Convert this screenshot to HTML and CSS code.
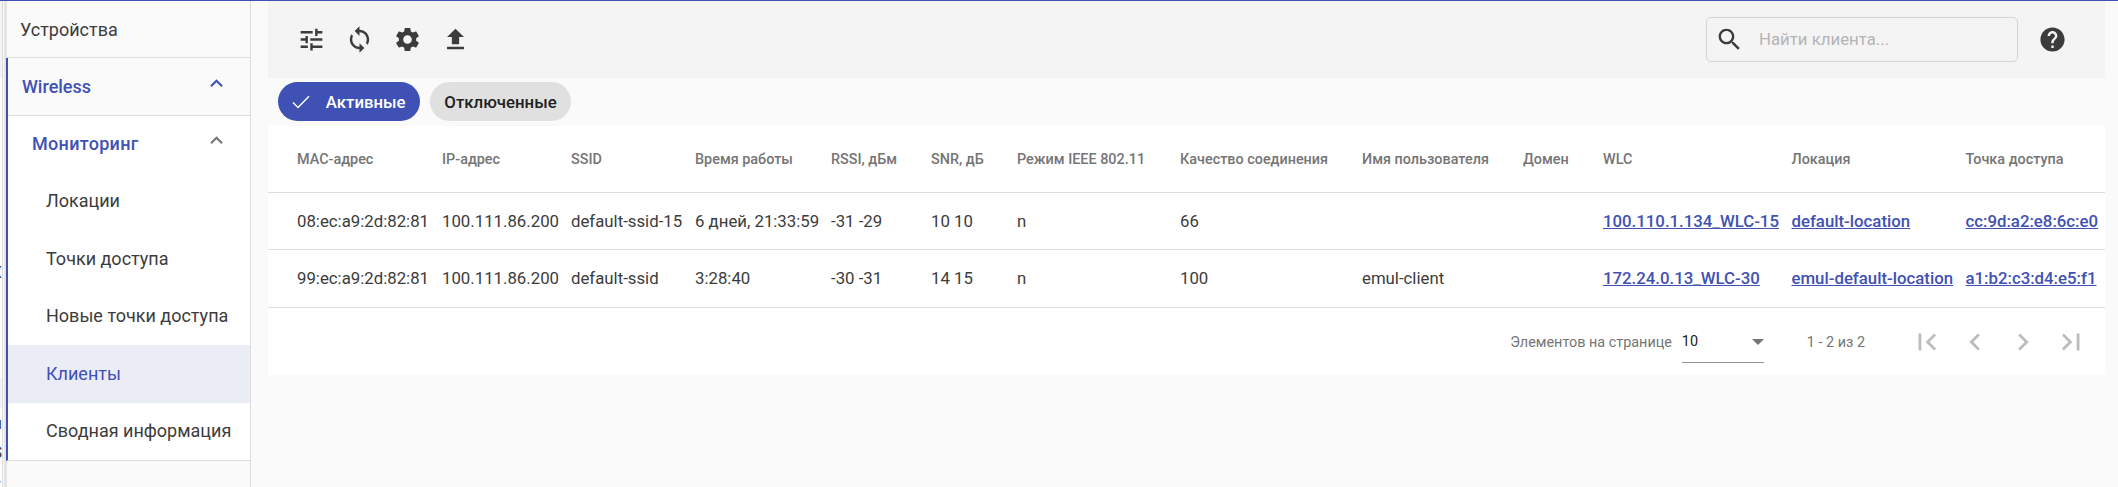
FILE: index.html
```html
<!DOCTYPE html>
<html lang="ru">
<head>
<meta charset="utf-8">
<title>Клиенты</title>
<link rel="stylesheet" href="styles.css">
</head>
<body>
<div class="app">
  <div class="rail">
    <div class="rail-head"></div>
    <div class="rail-body"><span class="frag f1">X</span></div>
    <div class="rail-band"></div>
    <div class="rail-foot"><span class="frag f2">и</span><span class="frag f3">S</span><span class="frag f4">–</span></div>
  </div>
  <div class="gutter"></div>
  <nav class="sidebar">
    <a class="nav-top">Устройства</a>
    <div class="nav-group">
      <a class="nav-title">Wireless<svg class="chev" viewBox="0 0 24 24"><path d="M12 8l-6 6 1.41 1.41L12 10.83l4.59 4.58L18 14z"/></svg></a>
      <div class="nav-list">
        <a class="nav-sub">Мониторинг<svg class="chev grey" viewBox="0 0 24 24"><path d="M12 8l-6 6 1.41 1.41L12 10.83l4.59 4.58L18 14z"/></svg></a>
        <a class="nav-item">Локации</a>
        <a class="nav-item">Точки доступа</a>
        <a class="nav-item">Новые точки доступа</a>
        <a class="nav-item active">Клиенты</a>
        <a class="nav-item">Сводная информация</a>
      </div>
    </div>
  </nav>
  <main class="main">
    <header class="toolbar">
      <div class="tools">
        <svg class="icon" viewBox="0 0 24 24"><path d="M3 17v2h6v-2H3zM3 5v2h10V5H3zm10 16v-2h8v-2h-8v-2h-2v6h2zM7 9v2H3v2h4v2h2V9H7zm14 4v-2H11v2h10zm-6-4h2V7h4V5h-4V3h-2v6z"/></svg>
        <svg class="icon" viewBox="0 0 24 24"><path d="M12 4V1L8 5l4 4V6c3.31 0 6 2.69 6 6 0 1.01-.25 1.97-.7 2.8l1.46 1.46C19.54 15.03 20 13.57 20 12c0-4.42-3.58-8-8-8zm0 14c-3.31 0-6-2.69-6-6 0-1.01.25-1.97.7-2.8L5.24 7.74C4.46 8.97 4 10.43 4 12c0 4.42 3.58 8 8 8v3l4-4-4-4v3z"/></svg>
        <svg class="icon" viewBox="0 0 24 24"><path d="M19.14 12.94c.04-.3.06-.61.06-.94 0-.32-.02-.64-.07-.94l2.03-1.58c.18-.14.23-.41.12-.61l-1.92-3.32c-.12-.22-.37-.29-.59-.22l-2.39.96c-.5-.38-1.03-.7-1.62-.94l-.36-2.54c-.04-.24-.24-.41-.48-.41h-3.84c-.24 0-.43.17-.47.41l-.36 2.54c-.59.24-1.13.57-1.62.94l-2.39-.96c-.22-.08-.47 0-.59.22L2.74 8.87c-.12.21-.08.47.12.61l2.03 1.58c-.05.3-.09.63-.09.94s.02.64.07.94l-2.03 1.58c-.18.14-.23.41-.12.61l1.92 3.32c.12.22.37.29.59.22l2.39-.96c.5.38 1.03.7 1.62.94l.36 2.54c.05.24.24.41.48.41h3.84c.24 0 .44-.17.47-.41l.36-2.54c.59-.24 1.13-.56 1.62-.94l2.39.96c.22.08.47 0 .59-.22l1.92-3.32c.12-.22.07-.47-.12-.61l-2.01-1.58zM12 15.6c-1.98 0-3.6-1.62-3.6-3.6s1.62-3.6 3.6-3.6 3.6 1.62 3.6 3.6-1.62 3.6-3.6 3.6z"/></svg>
        <svg class="icon" viewBox="0 0 24 24"><path d="M5 20h14v-2H5v2zM5 10h4v6h6v-6h4l-7-7-7 7z"/></svg>
      </div>
      <div class="search">
        <svg class="icon" viewBox="0 0 24 24"><path d="M15.5 14h-.79l-.28-.27C15.41 12.59 16 11.11 16 9.5 16 5.91 13.09 3 9.5 3S3 5.91 3 9.5 5.91 16 9.5 16c1.61 0 3.09-.59 4.23-1.57l.27.28v.79l5 4.99L20.49 19l-4.99-5zm-6 0C7.01 14 5 11.99 5 9.5S7.01 5 9.5 5 14 7.01 14 9.5 11.99 14 9.5 14z"/></svg>
        <span class="placeholder">Найти клиента...</span>
      </div>
      <svg class="icon help" viewBox="0 0 24 24"><path d="M12 2C6.48 2 2 6.48 2 12s4.48 10 10 10 10-4.48 10-10S17.52 2 12 2zm1 17h-2v-2h2v2zm2.07-7.75l-.9.92C13.45 12.9 13 13.5 13 15h-2v-.5c0-1.1.45-2.1 1.17-2.83l1.24-1.26c.37-.36.59-.86.59-1.41 0-1.1-.9-2-2-2s-2 .9-2 2H8c0-2.21 1.79-4 4-4s4 1.79 4 4c0 .88-.36 1.68-.93 2.25z"/></svg>
    </header>
    <div class="chips">
      <button class="chip on"><svg class="tick" viewBox="0 0 18 14"><path d="M1 7.5L6 12.5 17 1.2"/></svg>Активные</button>
      <button class="chip">Отключенные</button>
    </div>
    <section class="card">
      <table class="grid">
        <colgroup><col class="c1"><col class="c2"><col class="c3"><col class="c4"><col class="c5"><col class="c6"><col class="c7"><col class="c8"><col class="c9"><col class="c10"><col class="c11"><col class="c12"><col class="c13"></colgroup>
        <thead><tr><th>MAC-адрес</th><th>IP-адрес</th><th>SSID</th><th>Время работы</th><th>RSSI, дБм</th><th>SNR, дБ</th><th>Режим IEEE 802.11</th><th>Качество соединения</th><th>Имя пользователя</th><th>Домен</th><th>WLC</th><th>Локация</th><th>Точка доступа</th></tr></thead>
        <tbody>
          <tr><td>08:ec:a9:2d:82:81</td><td>100.111.86.200</td><td>default-ssid-15</td><td>6 дней, 21:33:59</td><td>-31 -29</td><td>10 10</td><td>n</td><td>66</td><td></td><td></td><td><a class="link">100.110.1.134_WLC-15</a></td><td><a class="link">default-location</a></td><td><a class="link">cc:9d:a2:e8:6c:e0</a></td></tr>
          <tr class="last"><td>99:ec:a9:2d:82:81</td><td>100.111.86.200</td><td>default-ssid</td><td>3:28:40</td><td>-30 -31</td><td>14 15</td><td>n</td><td>100</td><td>emul-client</td><td></td><td><a class="link">172.24.0.13_WLC-30</a></td><td><a class="link">emul-default-location</a></td><td><a class="link">a1:b2:c3:d4:e5:f1</a></td></tr>
        </tbody>
      </table>
      <footer class="pager">
        <span class="pager-label">Элементов на странице</span>
        <span class="select">10<i class="caret"></i></span>
        <span class="range">1 - 2 из 2</span>
        <span class="pages">
          <svg viewBox="0 0 24 24"><path d="M18.41 16.59L13.82 12l4.59-4.59L17 6l-6 6 6 6zM6 6h2v12H6z"/></svg>
          <svg viewBox="0 0 24 24"><path d="M15.41 7.41L14 6l-6 6 6 6 1.41-1.41L10.83 12z"/></svg>
          <svg viewBox="0 0 24 24"><path d="M10 6L8.59 7.41 13.17 12l-4.58 4.59L10 18l6-6z"/></svg>
          <svg viewBox="0 0 24 24"><path d="M5.59 7.41L10.18 12l-4.59 4.59L7 18l6-6-6-6zM16 6h2v12h-2z"/></svg>
        </span>
      </footer>
    </section>
  </main>
</div>
</body>
</html>
```
FILE: styles.css
```css
* { box-sizing: border-box; }
body { margin: 0; background: #fafafa; color: #3c3c3c; font-family: Roboto, "Noto Sans", sans-serif; }
.app { display: flex; height: 487px; overflow: hidden; border-top: 1px solid #3f51b5; }

.rail { flex: none; display: flex; flex-direction: column; width: 3px; border-right: 1px solid #dcdcdc; overflow: hidden; background: #fff; }
.rail-head { height: 77px; background: #f4f4f4; }
.rail-body { position: relative; height: 300px; }
.rail-band { height: 30px; background: #f4f4f4; }
.rail-foot { position: relative; flex: 1; background: #fff; }
.frag { position: absolute; right: 0; font-size: 17px; line-height: 20px; }
.f1 { top: 184px; }
.f2 { top: 5px; }
.f3 { top: 34px; }
.f4 { top: 64px; }
.gutter { flex: none; width: 3px; margin-left: 1px; background: #e4e4e4; }

.sidebar { flex: none; width: 245px; border-right: 1px solid #dcdcdc; margin-left: -1px; font-size: 18px; }
.sidebar a { display: flex; align-items: center; }
.nav-top { height: 57px; padding-left: 14px; border-bottom: 1px solid #dcdcdc; }
.nav-group { border-left: 2px solid #3f51b5; border-bottom: 1px solid #dcdcdc; }
.nav-title { height: 58px; padding-left: 14px; color: #3f51b5; font-weight: 500; border-bottom: 1px solid #dcdcdc; }
.nav-list { background: #fff; }
.nav-sub { height: 57px; padding: 0 0 2px 24px; color: #3f51b5; font-weight: 500; letter-spacing: .3px; }
.nav-item { height: 57.4px; padding: 0 0 2px 38px; }
.nav-item.active { padding-bottom: 0; background: #eaecf6; color: #3f51b5; }
.chev { width: 25px; height: 25px; margin: -7px 21px 0 auto; fill: #3f51b5; }
.chev.grey { margin-top: -6px; fill: #757575; }

.main { flex: none; width: 1837px; margin-left: 17px; }
.toolbar { display: flex; align-items: center; height: 77px; padding: 0 38.5px 0 29px; background: #f4f4f4; }
.icon { width: 29px; height: 29px; fill: #3c3c3c; display: block; flex: none; }
.tools { display: flex; gap: 19px; flex: 1; }
.search { display: flex; align-items: center; width: 312px; height: 45px; border: 1px solid #d4d4d4; border-radius: 5px; padding-left: 8px; }
.placeholder { margin-left: 15px; padding-bottom: 1px; font-size: 16.8px; color: #b4b4b4; }
.help { margin-left: 19.5px; }
.chips { display: flex; gap: 10px; padding: 4px 10px; height: 48px; }
.chip { display: flex; align-items: center; height: 39px; border: 0; border-radius: 20px; padding: 0 14.4px; font: 500 16.8px Roboto, sans-serif; background: #e0e0e0; color: #212121; }
.chip.on { background: #3f51b5; color: #fff; }
.tick { width: 18px; height: 14px; margin-right: 15.4px; fill: none; stroke: #fff; stroke-width: 1.5; }

.card { background: #fff; height: 249px; }
.grid { table-layout: fixed; width: 1837px; border-collapse: separate; border-spacing: 0; }
.grid th, .grid td { padding: 0; text-align: left; white-space: nowrap; border-bottom: 1px solid #dedede; }
.grid th { height: 67px; font-size: 14.4px; font-weight: 500; color: #757575; }
.grid td { height: 57px; font-size: 16.8px; }
.grid .last td { height: 58px; padding-bottom: 1px; }
.grid th:first-child, .grid td:first-child { padding-left: 29px; }
.c1 { width: 174px; } .c2 { width: 129px; } .c3 { width: 124px; } .c4 { width: 136px; }
.c5 { width: 100px; } .c6 { width: 86px; } .c7 { width: 163px; } .c8 { width: 182px; }
.c9 { width: 161px; } .c10 { width: 80px; } .c11 { width: 188.5px; } .c12 { width: 174px; } .c13 { width: 139.5px; }
.link { color: #3f51b5; font-weight: 500; text-decoration: underline; }

.pager { display: flex; align-items: center; justify-content: flex-end; height: 68px; padding-right: 17px; font-size: 14.4px; color: #757575; }
.select { display: flex; align-items: center; justify-content: space-between; width: 82px; height: 42px; margin-left: 10px; border-bottom: 1px solid #949494; color: #212121; }
.caret { border: 6px solid transparent; border-top-color: #757575; border-bottom: 0; }
.range { margin: 0 45px 0 43px; }
.pages { display: flex; gap: 14px; }
.pages svg { width: 34px; height: 34px; fill: #bdbdbd; }
```
